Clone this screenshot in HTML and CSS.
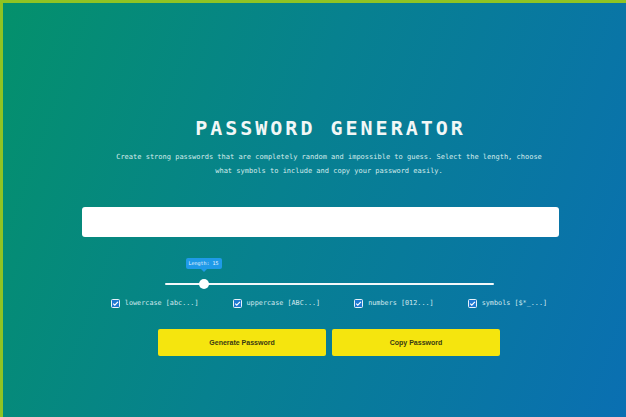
FILE: index.html
```html
<!DOCTYPE html>
<html>
<head>
<meta charset="utf-8">
<link rel="stylesheet" href="styles.css">
</head>
<body>
<main class="page">
  <h1 class="title">PASSWORD GENERATOR</h1>
  <p class="subtitle">Create strong passwords that are completely random and impossible to guess. Select the length, choose<br>what symbols to include and copy your password easily.</p>
  <div class="output"></div>
  <div class="slider">
    <div class="tip">Length: 15</div>
    <div class="track"></div>
    <div class="thumb"></div>
  </div>
  <div class="options">
    <label class="opt"><span class="box"><svg viewBox="0 0 9 9" width="9" height="9"><rect x="0.5" y="0.5" width="8" height="8" rx="1" fill="#1f78d1" stroke="#e8f2fb"/><path d="M2.2 4.6 L3.8 6.2 L6.9 2.8" fill="none" stroke="#fff" stroke-width="1.2"/></svg></span>lowercase [abc...]</label>
    <label class="opt"><span class="box"><svg viewBox="0 0 9 9" width="9" height="9"><rect x="0.5" y="0.5" width="8" height="8" rx="1" fill="#1f78d1" stroke="#e8f2fb"/><path d="M2.2 4.6 L3.8 6.2 L6.9 2.8" fill="none" stroke="#fff" stroke-width="1.2"/></svg></span>uppercase [ABC...]</label>
    <label class="opt"><span class="box"><svg viewBox="0 0 9 9" width="9" height="9"><rect x="0.5" y="0.5" width="8" height="8" rx="1" fill="#1f78d1" stroke="#e8f2fb"/><path d="M2.2 4.6 L3.8 6.2 L6.9 2.8" fill="none" stroke="#fff" stroke-width="1.2"/></svg></span>numbers [012...]</label>
    <label class="opt"><span class="box"><svg viewBox="0 0 9 9" width="9" height="9"><rect x="0.5" y="0.5" width="8" height="8" rx="1" fill="#1f78d1" stroke="#e8f2fb"/><path d="M2.2 4.6 L3.8 6.2 L6.9 2.8" fill="none" stroke="#fff" stroke-width="1.2"/></svg></span>symbols [$*_...]</label>
  </div>
  <div class="buttons">
    <button class="btn">Generate Password</button>
    <button class="btn">Copy Password</button>
  </div>
</main>
</body>
</html>
```

FILE: styles.css
```css
html, body {
  margin: 0;
  padding: 0;
}
body {
  width: 626px;
  height: 417px;
  box-sizing: border-box;
  border-top: 3px solid #8fc423;
  border-left: 3px solid #8fc423;
  background: linear-gradient(110deg, #04916b 0%, #07818f 45%, #0a6fb2 100%);
  overflow: hidden;
  font-family: "DejaVu Sans Mono", monospace;
}
.page {
  display: flex;
  flex-direction: column;
  align-items: center;
  padding-top: 113px;
  padding-left: 29px;
}
.title {
  margin: 0;
  font-size: 20px;
  line-height: 24px;
  font-weight: bold;
  letter-spacing: 3px;
  color: #f2f7f6;
  padding-left: 3px;
}
.subtitle {
  margin: 10px 0 0;
  font-size: 7px;
  line-height: 14px;
  color: #d5ecec;
  text-align: center;
  white-space: nowrap;
}
.output {
  margin-top: 29px;
  margin-right: 17px;
  width: 477px;
  height: 30px;
  background: #fff;
  border-radius: 3px;
}
.slider {
  position: relative;
  margin-top: 21px;
  width: 329px;
  height: 30px;
}
.track {
  margin-top: 25px;
  height: 2px;
  background: #f4f8fa;
  border-radius: 1px;
}
.thumb {
  position: absolute;
  left: 34px;
  top: 21px;
  width: 10px;
  height: 10px;
  border-radius: 50%;
  background: #fff;
}
.tip {
  position: absolute;
  left: 21px;
  top: 0;
  width: 36px;
  height: 11px;
  border-radius: 2px;
  background: #1f9ae8;
  color: #e6f4ff;
  font-size: 5px;
  line-height: 11px;
  text-align: center;
}
.tip::after {
  content: "";
  position: absolute;
  left: 15px;
  top: 11px;
  border-left: 3px solid transparent;
  border-right: 3px solid transparent;
  border-top: 3px solid #1f9ae8;
}
.options {
  margin-top: 10px;
  display: flex;
  gap: 34px;
  height: 10px;
  align-items: center;
}
.opt {
  display: flex;
  align-items: center;
  gap: 5px;
  font-size: 6.8px;
  color: #d3e9ef;
  white-space: nowrap;
}
.box {
  display: flex;
}
.buttons {
  margin-top: 21px;
  display: flex;
  gap: 6px;
}
.btn {
  width: 168px;
  height: 27px;
  border: none;
  border-radius: 2px;
  background: #f5e50e;
  color: #3a3a12;
  font-family: "Liberation Sans", Arial, sans-serif;
  font-weight: bold;
  font-size: 7px;
  padding: 0;
}
```
